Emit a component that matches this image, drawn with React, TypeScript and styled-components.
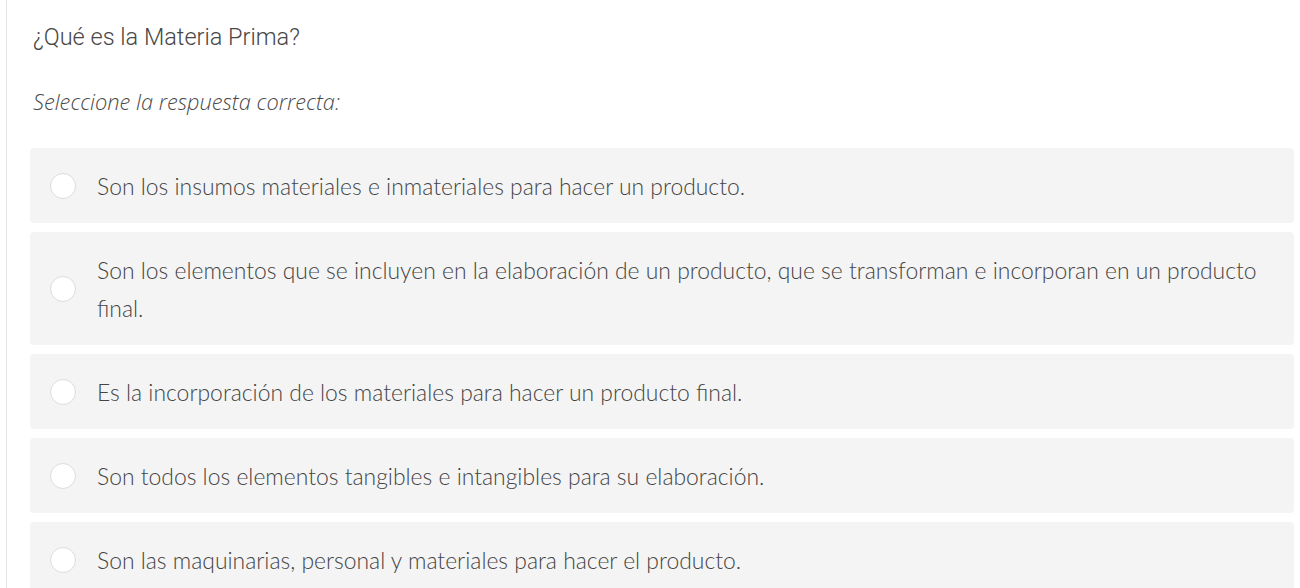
import React from 'react';
import styled, { createGlobalStyle } from 'styled-components';

const GlobalStyle = createGlobalStyle`
  html, body {
    margin: 0;
    padding: 0;
    background: #ffffff;
  }
`;

const Panel = styled.div`
  margin-left: 6px;
  min-height: 588px;
  border-left: 1px solid #e4e4e4;
  padding: 22px 6px 0 23px;
  box-sizing: border-box;
  color: #333;
`;

const Question = styled.p`
  margin: 0 0 0 3px;
  font-family: Roboto, 'Liberation Sans', sans-serif;
  font-weight: 300;
  font-size: 23.5px;
  line-height: 30px;
  color: #474747;
`;

const Prompt = styled.p`
  margin: 35px 0 0 3px;
  font-family: 'Open Sans', sans-serif;
  font-style: italic;
  font-weight: 300;
  font-size: 21.8px;
  line-height: 30px;
  color: #4a4a4a;
`;

const OptionList = styled.div`
  display: flex;
  flex-direction: column;
  gap: 9px;
  margin-top: 31px;
`;

const Option = styled.label`
  display: flex;
  align-items: center;
  gap: 21px;
  padding: 18.5px 20px;
  background: #f4f4f4;
  border-radius: 4px;
  cursor: pointer;
`;

const Radio = styled.span`
  flex: 0 0 auto;
  width: 24px;
  height: 24px;
  border-radius: 50%;
  background: #fff;
  border: 1px solid #dcdcdc;
`;

const OptionText = styled.span`
  font-family: Lato, 'Open Sans', sans-serif;
  font-weight: 300;
  font-size: 22.9px;
  line-height: 38px;
  color: #444;
`;

const options = [
  'Son los insumos materiales e inmateriales para hacer un producto.',
  'Son los elementos que se incluyen en la elaboración de un producto, que se transforman e incorporan en un producto final.',
  'Es la incorporación de los materiales para hacer un producto final.',
  'Son todos los elementos tangibles e intangibles para su elaboración.',
  'Son las maquinarias, personal y materiales para hacer el producto.',
];

const App = () => {
  return (
    <>
      <GlobalStyle />
      <Panel>
        <Question>¿Qué es la Materia Prima?</Question>
        <Prompt>Seleccione la respuesta correcta:</Prompt>
        <OptionList>
          {options.map((text, i) => (
            <Option key={i}>
              <Radio />
              <OptionText>{text}</OptionText>
            </Option>
          ))}
        </OptionList>
      </Panel>
    </>
  );
};

export default App;
